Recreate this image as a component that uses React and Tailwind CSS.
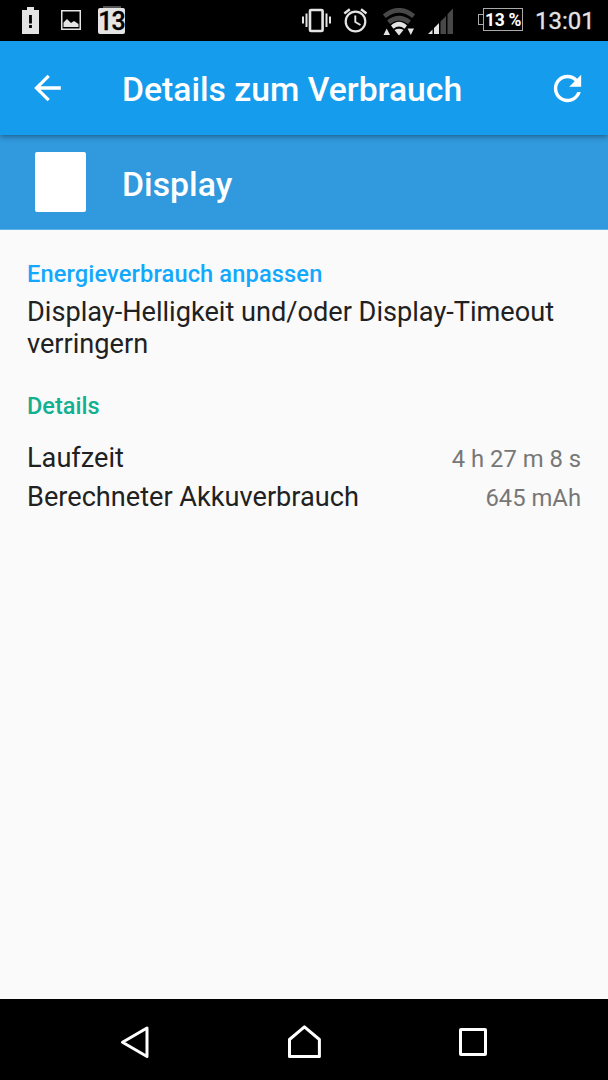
import React from "react";

function StatusBar() {
  return (
    <div className="flex h-[41px] items-start bg-black text-[#e4e4e4]">
      <svg className="ml-[22px] mt-[7px] h-[27px] w-[17px]" viewBox="0 0 17 27">
        <path fill="#e4e4e4" d="M0 3h5V0h7v3h5v24H0z" />
        <path stroke="#000" strokeWidth="2.8" d="M8.5 8v8.5M8.5 18v3" />
      </svg>
      <svg className="ml-[22px] mt-[10px] h-5 w-5" viewBox="0 0 20 20">
        <path
          fill="none"
          stroke="#e4e4e4"
          strokeWidth="1.5"
          d="M.75.75h18.5v18.5H.75z"
        />
        <path fill="#e4e4e4" d="M2.500 17v-4.500l3.500-3.500 4 4 3-2 4.500 3V17z" />
      </svg>
      <div className="ml-[17px] mt-[6px] w-[27px]">
        <div className="mx-auto h-[2px] w-[18px] bg-[#555]" />
        <div className="h-[26px] rounded-[2px] bg-[#e4e4e4] text-center text-[25px] leading-[27px] font-medium tracking-[-1px] text-black [-webkit-text-stroke:0.3px_#000]">
          13
        </div>
      </div>

      <svg
        className="ml-[176px] mt-[8px] h-[25px] w-[31px]"
        viewBox="0 0 31 25"
        fill="none"
        stroke="#e4e4e4"
      >
        <rect x="9" y="2" width="12.600" height="21" rx="1" strokeWidth="2.600" />
        <path
          strokeWidth="2"
          d="M5.500 5.500v13.500M25.500 5.500v13.500M2 8.500v7M29 8.500v7"
        />
      </svg>
      <svg
        className="ml-[11px] mt-[7px] h-[27px] w-6"
        viewBox="0 0 24 27"
        fill="none"
        stroke="#e4e4e4"
      >
        <circle cx="12.500" cy="14.500" r="9.800" strokeWidth="2.200" />
        <path strokeWidth="1.900" d="M12.300 8.500v6.500l5.200 3" />
        <path strokeWidth="2.400" d="M1.300 6.500l5.500-4.300M23.500 6.500l-5.500-4.300" />
      </svg>
      <svg
        className="ml-4 mt-[8px] h-[28px] w-[32px]"
        viewBox="0 0 32 28"
        fill="none"
      >
        <path
          stroke="#484848"
          strokeWidth="4.600"
          d="M1.300 8.200Q16-3.600 30.700 8.200M5.500 14.200Q16 6 26.500 14.200"
        />
        <path fill="#e4e4e4" d="M8 17.500Q16 10 24 17.500l-2.500 3.200Q16 16.500 10.500 20.700z" />
        <path
          fill="#e4e4e4"
          d="M11.500 22Q16 19.500 20.500 22L16 27.500zM.5 27h6.500L3.700 20.500zM24.500 20.500H31l-3.200 6.500z"
        />
      </svg>
      <svg className="ml-[13px] mt-[8px] h-[26px] w-[25px]" viewBox="0 0 25 26">
        <path fill="#e4e4e4" d="M0 26l4.500-4.500V26zM6 26v-6l5-5V26z" />
        <path fill="#484848" d="M12.500 26V13.500l5.500-5.500v18zM19.500 26V6L25 .5V26z" />
      </svg>
      <div className="ml-[25px] mt-[8px] flex items-center">
        <div className="h-[11px] w-[5px] border border-r-0 border-[#aaa]" />
        <div className="h-[23px] w-[40px] border border-[#aaa] text-center text-[17.5px] leading-[22px] font-bold tracking-[-0.3px] whitespace-nowrap text-white">
          13 %
        </div>
      </div>
      <span className="ml-[12px] mt-[7px] text-[24px] leading-[29px] whitespace-nowrap [-webkit-text-stroke:0.3px_#e4e4e4]">
        13:01
      </span>
    </div>
  );
}

function Toolbar() {
  return (
    <header className="relative flex h-[94px] items-start bg-[#169cec] pt-[27px] text-white shadow-[0_1px_6px_rgba(0,0,0,0.45)]">
      <svg
        className="ml-[27px] h-[40px] w-[41px]"
        viewBox="0 0 24 24"
        fill="currentColor"
      >
        <path d="M20 11H7.830l5.590-5.590L12 4l-8 8 8 8 1.410-1.410L7.830 13H20v-2z" />
      </svg>
      <h1 className="ml-[54px] mt-[2px] text-[33.7px] leading-[40px] font-medium">
        Details zum Verbrauch
      </h1>
      <svg
        className="mr-[20px] ml-auto h-[41px] w-[41px]"
        viewBox="0 0 24 24"
        fill="currentColor"
      >
        <path d="M17.650 6.350C16.200 4.900 14.210 4 12 4c-4.420 0-7.990 3.580-7.990 8s3.570 8 7.990 8c3.730 0 6.840-2.550 7.730-6h-2.080c-.820 2.330-3.040 4-5.650 4-3.310 0-6-2.690-6-6s2.690-6 6-6c1.660 0 3.140.690 4.220 1.780L13 11h7V4l-2.350 2.350z" />
      </svg>
    </header>
  );
}

function Row({ label, value }) {
  return (
    <div className="flex h-[39px] items-baseline justify-between">
      <span className="text-[27.15px] leading-[32px]">{label}</span>
      <span className="text-[23.8px] leading-[28px] text-[#777]">{value}</span>
    </div>
  );
}

function NavBar() {
  return (
    <nav className="flex h-[81px] items-start bg-black">
      <svg
        className="ml-[120px] mt-[26px] h-[34px] w-[30px]"
        viewBox="0 0 30 34"
        fill="none"
        stroke="#fff"
        strokeWidth="3"
        strokeLinejoin="round"
      >
        <path d="M2.500 17.300L27 3v28.500z" />
      </svg>
      <svg
        className="ml-[137px] mt-[25px] h-[35px] w-[35px]"
        viewBox="0 0 35 35"
        fill="none"
        stroke="#fff"
        strokeWidth="3"
        strokeLinejoin="round"
      >
        <path d="M2.500 15.500L17.400 2.800l15 12.700v17H2.500z" />
      </svg>
      <div className="ml-[137px] mt-[29px] h-[28px] w-[28px] rounded-[2px] border-[3px] border-white" />
    </nav>
  );
}

export default function App() {
  return (
    <div className="flex h-[1080px] w-[608px] flex-col overflow-hidden bg-[#fafafa] font-['Roboto',sans-serif] text-[#212121]">
      <StatusBar />
      <Toolbar />
      <div className="flex h-[95px] items-start border-b border-[#5fb2e8] bg-[#3199dd] text-white">
        <div className="mt-[17px] ml-[35px] h-[60px] w-[51px] rounded-[2px] bg-white" />
        <h2 className="mt-[30px] ml-[36px] text-[33.8px] leading-[40px] font-medium">
          Display
        </h2>
      </div>

      <main className="flex-1 px-[27px] pt-[30px]">
        <h3 className="text-[23.65px] leading-[28px] font-medium tracking-[0.12px] text-[#12a8fd]">
          Energieverbrauch anpassen
        </h3>
        <p className="mt-[8px] text-[27.15px] leading-[32px]">
          Display-Helligkeit und/oder Display-Timeout verringern
        </p>
        <h3 className="mt-[32px] text-[23.5px] leading-[28px] font-medium text-[#10b090]">
          Details
        </h3>
        <div className="mt-[22px]">
          <Row label="Laufzeit" value="4 h 27 m 8 s" />
          <Row label="Berechneter Akkuverbrauch" value="645 mAh" />
        </div>
      </main>
      <NavBar />
    </div>
  );
}
